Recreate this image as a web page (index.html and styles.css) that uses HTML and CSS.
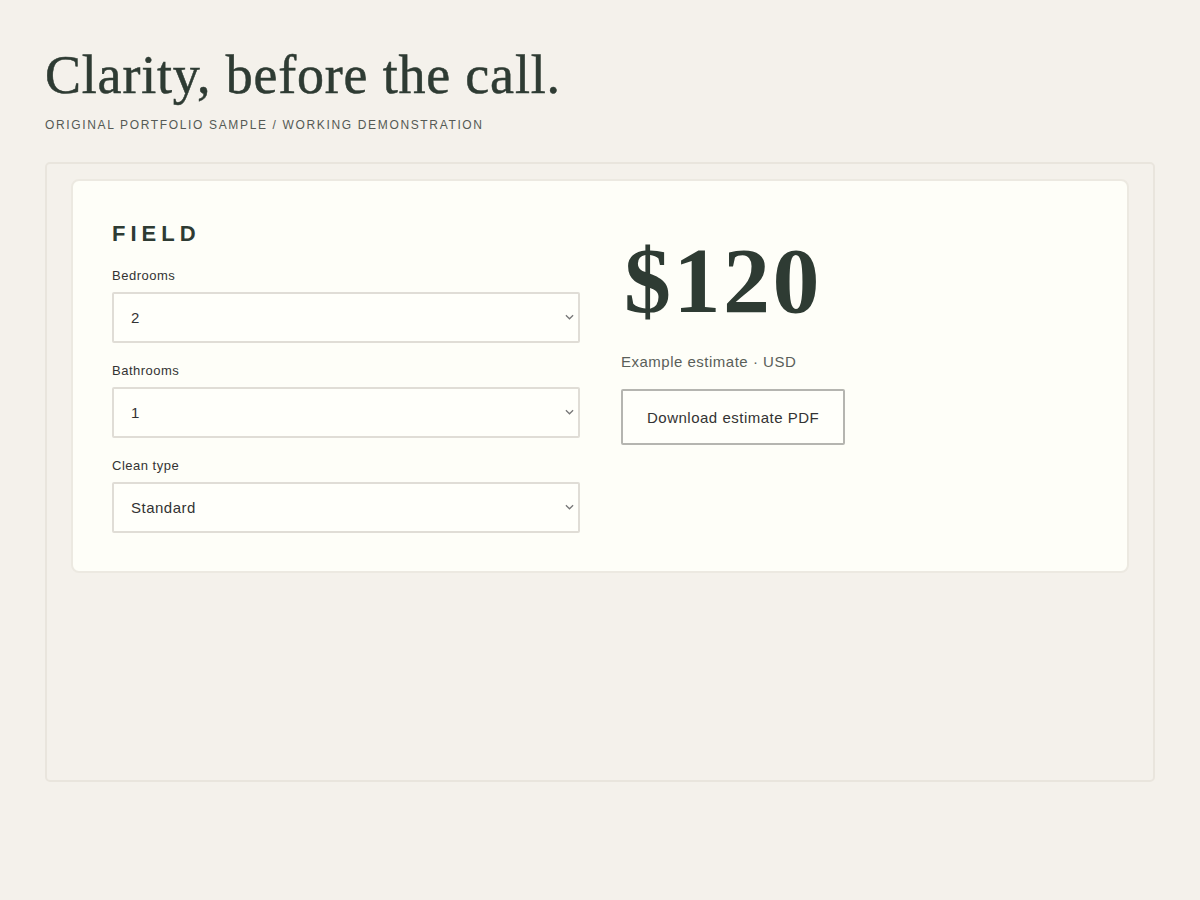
FILE: index.html
```html
<!DOCTYPE html>
<html lang="en">

<head>
    <meta charset="UTF-8">
    <meta name="viewport" content="width=device-width, initial-scale=1.0">
    <title>Clarity, before the call.</title>
    <link rel="stylesheet" href="styles.css">
</head>

<body>
    <header class="page-header">
        <h1>Clarity, before the call.</h1>
        <p class="eyebrow">Original portfolio sample / working demonstration</p>
    </header>

    <div class="frame">
        <div class="card">
            <form class="fields">
                <h2>Field</h2>

                <label for="bedrooms">Bedrooms</label>
                <div class="select-wrap">
                    <select id="bedrooms" name="bedrooms">
                        <option>1</option>
                        <option selected>2</option>
                        <option>3</option>
                        <option>4</option>
                    </select>
                    <svg class="chevron" viewBox="0 0 10 6" width="9" height="6"><path d="M1 1l4 4 4-4" /></svg>
                </div>

                <label for="bathrooms">Bathrooms</label>
                <div class="select-wrap">
                    <select id="bathrooms" name="bathrooms">
                        <option selected>1</option>
                        <option>2</option>
                        <option>3</option>
                    </select>
                    <svg class="chevron" viewBox="0 0 10 6" width="9" height="6"><path d="M1 1l4 4 4-4" /></svg>
                </div>

                <label for="cleanType">Clean type</label>
                <div class="select-wrap">
                    <select id="cleanType" name="cleanType">
                        <option selected>Standard</option>
                        <option>Deep</option>
                        <option>Move-out</option>
                    </select>
                    <svg class="chevron" viewBox="0 0 10 6" width="9" height="6"><path d="M1 1l4 4 4-4" /></svg>
                </div>
            </form>

            <div class="estimate">
                <div class="price">$120</div>
                <p class="note">Example estimate · USD</p>
                <button type="button" class="btn">Download estimate PDF</button>
            </div>
        </div>
    </div>
</body>

</html>
```

FILE: styles.css
```css
body {
    font-family: "Liberation Sans", Arial, sans-serif;
    background-color: #f4f1eb;
    color: #2e3b33;
    margin: 0;
    padding: 43px 45px 0;
}

.page-header h1 {
    font-family: "Liberation Serif", "Times New Roman", serif;
    font-weight: normal;
    font-size: 54px;
    line-height: 64px;
    letter-spacing: 0.8px;
    -webkit-text-stroke: 0.5px #2e3b33;
    margin: 0;
    color: #2e3b33;
}

.eyebrow {
    font-size: 12px;
    line-height: 14px;
    letter-spacing: 1.65px;
    text-transform: uppercase;
    color: #555a55;
    margin: 11px 0 0;
}

.frame {
    margin-top: 30px;
    height: 620px;
    box-sizing: border-box;
    border: 2px solid #e9e5dd;
    border-radius: 5px;
    padding: 15px 24px;
}

.card {
    display: grid;
    grid-template-columns: 1fr 1fr;
    gap: 41px;
    background-color: #fefef8;
    border: 2px solid #ece9e1;
    border-radius: 8px;
    padding: 38px 38px 38px 39px;
}

.fields h2 {
    font-size: 22px;
    letter-spacing: 5px;
    text-transform: uppercase;
    margin: 2px 0 21px;
    color: #2e3b33;
}

.fields label {
    display: block;
    font-size: 13px;
    letter-spacing: 0.5px;
    color: #333;
    margin-bottom: 9px;
}

.select-wrap {
    position: relative;
    margin-bottom: 20px;
}

.select-wrap:last-child {
    margin-bottom: 0;
}

.fields select {
    display: block;
    width: 100%;
    height: 51px;
    padding: 0 24px 0 17px;
    border: 2px solid #e0ddd6;
    border-radius: 2px;
    background-color: #fffffa;
    font-family: "Liberation Sans", Arial, sans-serif;
    font-size: 15px;
    letter-spacing: 0.5px;
    color: #333;
    appearance: none;
    -webkit-appearance: none;
}

.chevron {
    position: absolute;
    right: 6px;
    top: 22px;
    fill: none;
    stroke: #777;
    stroke-width: 1.4;
    pointer-events: none;
}

.estimate {
    padding-top: 12px;
}

.price {
    font-family: "Liberation Serif", "Times New Roman", serif;
    font-weight: bold;
    font-size: 94px;
    line-height: 98px;
    letter-spacing: 2.5px;
    margin-left: 3px;
    color: #2e3b33;
}

.note {
    font-size: 15px;
    line-height: 17px;
    letter-spacing: 0.5px;
    color: #5a5f5a;
    margin: 24px 0 19px;
}

.btn {
    font-family: "Liberation Sans", Arial, sans-serif;
    font-size: 15px;
    letter-spacing: 0.5px;
    color: #333;
    background-color: #fffffa;
    border: 2px solid #b5b5b0;
    border-radius: 2px;
    padding: 0 24px;
    height: 56px;
    cursor: pointer;
}

.btn:hover {
    background-color: #f4f1eb;
}
```
